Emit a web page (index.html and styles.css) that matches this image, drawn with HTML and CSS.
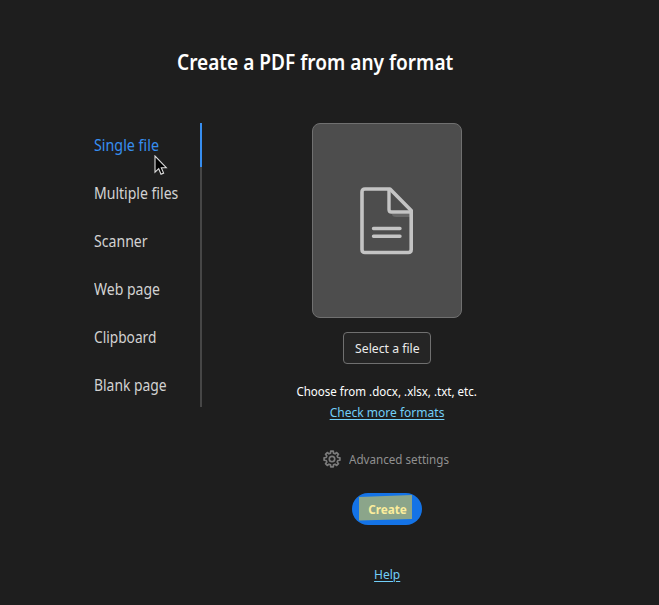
FILE: index.html
```html
<!DOCTYPE html>
<html lang="en">
<head>
<meta charset="utf-8">
<title>Create a PDF</title>
<link rel="stylesheet" href="styles.css">
</head>
<body>
<main class="page">
  <h1 class="title"><span>Create a PDF from any format</span></h1>
  <div class="content">
    <nav class="tabs">
      <a class="tab active"><span class="t1">Single file</span></a>
      <a class="tab"><span class="t2">Multiple files</span></a>
      <a class="tab"><span class="t3">Scanner</span></a>
      <a class="tab"><span class="t4">Web page</span></a>
      <a class="tab"><span class="t5">Clipboard</span></a>
      <a class="tab"><span class="t6">Blank page</span></a>
    </nav>
    <section class="panel">
      <div class="drop">
        <svg class="doc" width="54" height="68" viewBox="0 0 54 68" fill="none" stroke="#c4c4c4" stroke-linecap="round" stroke-linejoin="round">
          <path d="M32 27h18v3H36q-4 0-4-3z" fill="#686868" stroke="none"/>
          <path d="M5 2H30L51.2 23.5V62.500q0 3-3 3H5q-3 0-3-3V5q0-3 3-3z" stroke-width="3.600"/>
          <path d="M29 3V22.500q0 2.500 2.500 2.500H50" stroke-width="3.400"/>
          <path d="M13.500 41.500H40M13.500 49.300H40" stroke-width="3.400"/>
        </svg>
      </div>
      <button class="select"><span>Select a file</span></button>
      <p class="hint"><span>Choose from .docx, .xlsx, .txt, etc.</span></p>
      <a class="link formats"><span>Check more formats</span></a>
      <div class="advanced">
        <svg width="18" height="18" viewBox="-9 -9 18 18" fill="none" stroke="#7b7b7b" stroke-width="1.700" stroke-linejoin="round">
          <path d="M-1.500-5.800L-1.250-7.900H1.250L1.500-5.800L3.040-5.160L4.700-6.470L6.470-4.700L5.160-3.040L5.800-1.500L7.900-1.250V1.250L5.800 1.500L5.160 3.040L6.470 4.700L4.700 6.470L3.040 5.160L1.500 5.800L1.250 7.900H-1.250L-1.500 5.800L-3.040 5.160L-4.700 6.470L-6.470 4.700L-5.160 3.040L-5.800 1.500L-7.900 1.250V-1.250L-5.800-1.500L-5.160-3.040L-6.470-4.700L-4.700-6.470L-3.040-5.160Z"/>
          <circle r="2.700"/>
        </svg>
        <span>Advanced settings</span>
      </div>
      <button class="create">
        <svg class="marker" width="56" height="28" viewBox="0 0 56 28"><path d="M1 4L54 2V26L1 27.500Z" fill="#8ba58a"/></svg>
        <span>Create</span>
      </button>
      <a class="link help"><span>Help</span></a>
    </section>
  </div>
  <svg class="cursor" width="14" height="21" viewBox="0 0 14 21"><path d="M1 1V17.200L4.700 13.700L7 19.200L9.600 18.100L7.300 12.700H12.300Z" fill="#000" stroke="#ddd" stroke-width="1.100"/></svg>
</main>
</body>
</html>
```
FILE: styles.css
```css
* { box-sizing: border-box; }
body {
  margin: 0;
  background: #1e1e1e;
  font-family: "Noto Sans", "Open Sans", sans-serif;
}
.page {
  position: relative;
  width: 659px;
  height: 605px;
  padding-top: 46px;
  overflow: hidden;
}
/* Condensed labels */
span { display: inline-block; white-space: nowrap; }
.title {
  margin: 0 0 45px 177px;
  height: 32px;
  line-height: 33px;
  font-size: 21px;
  font-weight: 600;
  color: #fff;
}
.title span { transform: scaleX(.908); transform-origin: left; }
.content { display: flex; margin-left: 94px; }
.tabs {
  display: flex;
  flex-direction: column;
  gap: 4px;
  width: 108px;
  height: 284px;
  background: linear-gradient(#464646, #464646) right / 2px 100% no-repeat;
}
.tab {
  height: 44px;
  line-height: 44px;
  font-size: 15.5px;
  color: #d2d2d2;
}
.tab span { transform-origin: left; }
.t1 { transform: scaleX(.922); }
.t2 { transform: scaleX(.906); }
.t3 { transform: scaleX(.91); }
.t4 { transform: scaleX(.905); }
.t5 { transform: scaleX(.885); }
.t6 { transform: scaleX(.895); }
.tab.active { color: #378ef0; border-right: 2px solid #378ef0; }
.panel {
  display: flex;
  flex-direction: column;
  align-items: center;
  width: 200px;
  margin-left: 85px;
}
.drop {
  display: flex;
  justify-content: center;
  width: 150px;
  height: 195px;
  padding-top: 63px;
  border: 1px solid #707070;
  border-radius: 8px;
  background: #4d4d4d;
}
.doc { margin-right: 1px; }
button {
  display: flex;
  align-items: center;
  justify-content: center;
  padding: 0;
  font-family: inherit;
}
.select {
  width: 88px;
  height: 32px;
  margin-top: 14px;
  border: 1px solid #707070;
  border-radius: 4px;
  background: #252525;
  color: #ebebeb;
  font-size: 13px;
}
.select span { transform: scaleX(.94); }
.hint {
  display: flex;
  justify-content: center;
  width: 100%;
  margin: 17px 0 0;
  height: 21px;
  line-height: 21px;
  font-size: 13px;
  color: #fff;
}
.hint span { flex: none; transform: scaleX(.888); }
.link {
  height: 21px;
  line-height: 21px;
  font-size: 13px;
  color: #72cff8;
}
.link span {
  text-decoration: underline;
  text-underline-offset: 2px;
  transform: scaleX(.925);
}
.advanced {
  display: flex;
  align-items: center;
  gap: 8px;
  height: 20px;
  margin: 26px 2px 0 0;
  color: #909090;
  font-size: 13px;
}
.advanced span { width: 100px; transform: scaleX(.895); transform-origin: left; }
.create {
  position: relative;
  width: 70px;
  height: 32px;
  margin-top: 24px;
  border: 0;
  border-radius: 16px;
  background: #1473e6;
  color: #fbed9c;
  font-size: 13px;
  font-weight: 700;
}
.create span { position: relative; transform: scaleX(.9); }
.marker { position: absolute; left: 6px; top: 0; }
.help { margin-top: 39px; }
.cursor { position: absolute; left: 154px; top: 155px; }
```
